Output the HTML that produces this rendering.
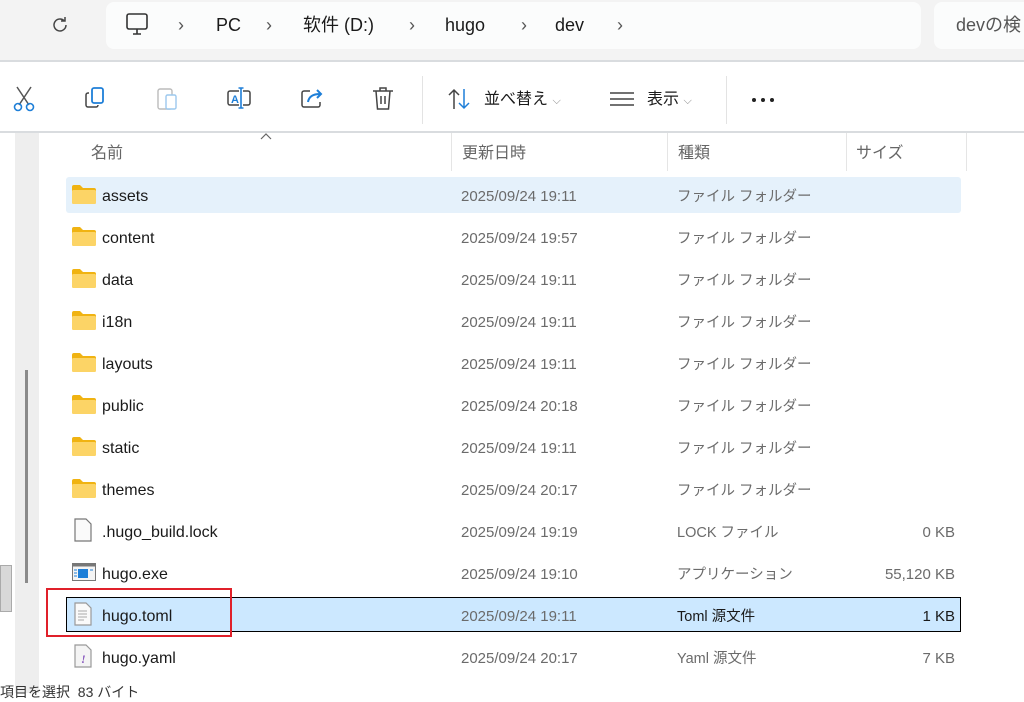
<!DOCTYPE html>
<html><head><meta charset="utf-8">
<style>
*{margin:0;padding:0;box-sizing:border-box}
body{width:1024px;height:698px;overflow:hidden;background:#fff;font-family:"Segoe UI","Liberation Sans","Noto Sans CJK JP",sans-serif;position:relative;color:#1a1a1a}
.abs{position:absolute}
.top{left:0;top:0;width:1024px;height:62px;background:#f3f3f3;border-bottom:2px solid #d9dcdf}
.addr{left:106px;top:2px;width:815px;height:47px;background:#fbfcfc;border-radius:8px}
.search{left:934px;top:2px;width:100px;height:47px;background:#fbfcfc;border-radius:8px}
.t{font-size:18px;line-height:20px;white-space:nowrap}
.g{color:#555}
.row{position:absolute;left:66px;width:895px;height:36px;line-height:36px}
.row div{position:absolute;top:2px;white-space:nowrap;line-height:36px}
.nm{left:36px;font-size:16px;color:#1a1a1a}
.dt{left:395px;font-size:15px;color:#6b6b6b}
.ty{left:611px;font-size:14.5px;color:#6b6b6b}
.sz{right:6px;font-size:15px;color:#6b6b6b}
.fold{position:absolute;left:6px;top:8px;width:24px;height:19px}
.hd{top:144px;font-size:16px;color:#666;line-height:20px}
.sep{width:1px;height:38px;top:133px;background:#e5e5e5}
</style></head><body>
<div class="abs top"></div>
<svg class="abs" style="left:50px;top:15px" width="20" height="20" viewBox="0 0 20 20"><path d="M16 10a6 6 0 1 1-2-4.5M15 2v4h-4" fill="none" stroke="#444" stroke-width="1.5"/></svg>
<div class="abs addr"></div>
<div class="abs search"></div>
<svg class="abs" style="left:125px;top:12px" width="26" height="26" viewBox="0 0 26 26"><rect x="2" y="2" width="20" height="15" rx="2" fill="none" stroke="#333" stroke-width="1.6"/><path d="M8 22h8M12 17v5" stroke="#333" stroke-width="1.6"/></svg>
<div class="abs t g" style="left:178px;top:15px">›</div>
<div class="abs t" style="left:216px;top:15px">PC</div>
<div class="abs t g" style="left:266px;top:15px">›</div>
<div class="abs t" style="left:303px;top:15px">软件 (D:)</div>
<div class="abs t g" style="left:409px;top:15px">›</div>
<div class="abs t" style="left:445px;top:15px">hugo</div>
<div class="abs t g" style="left:521px;top:15px">›</div>
<div class="abs t" style="left:555px;top:15px">dev</div>
<div class="abs t g" style="left:617px;top:15px">›</div>
<div class="abs t" style="left:956px;top:15px;color:#555">devの検</div>

<svg class="abs" style="left:12px;top:85px" width="24" height="28" viewBox="0 0 24 28"><path d="M5 2l12 18M19 2L7 20" stroke="#555" stroke-width="1.5"/><circle cx="6" cy="22" r="3.5" fill="none" stroke="#1e7fd8" stroke-width="1.6"/><circle cx="18" cy="22" r="3.5" fill="none" stroke="#1e7fd8" stroke-width="1.6"/></svg>
<svg class="abs" style="left:84px;top:86px" width="24" height="24" viewBox="0 0 24 24"><path d="M5 7h-1a2 2 0 0 0-2 2v10a2 2 0 0 0 2 2h8a2 2 0 0 0 2-2" fill="none" stroke="#444" stroke-width="1.5"/><rect x="8" y="2" width="11" height="15" rx="2" fill="none" stroke="#1e7fd8" stroke-width="1.8"/></svg>
<svg class="abs" style="left:156px;top:86px" width="24" height="26" viewBox="0 0 24 26"><rect x="2" y="3" width="14" height="20" rx="2" fill="none" stroke="#bbb" stroke-width="1.4"/><rect x="10" y="9" width="10" height="14" rx="1.5" fill="#fff" stroke="#9cc8ee" stroke-width="1.4"/></svg>
<svg class="abs" style="left:226px;top:86px" width="28" height="26" viewBox="0 0 28 26"><rect x="2" y="5" width="22" height="14" rx="2" fill="none" stroke="#444" stroke-width="1.5"/><rect x="13" y="3" width="4" height="20" fill="#fff"/><path d="M15 2v20M12.5 2h5M12.5 22h5" stroke="#1e7fd8" stroke-width="1.6"/><text x="5" y="17" font-size="11" font-family="Liberation Sans" font-weight="bold" fill="#1e7fd8">A</text></svg>
<svg class="abs" style="left:300px;top:86px" width="26" height="24" viewBox="0 0 26 24"><path d="M10 5H4a2 2 0 0 0-2 2v12a2 2 0 0 0 2 2h14a2 2 0 0 0 2-2v-3" fill="none" stroke="#444" stroke-width="1.5"/><path d="M8 16c1-6 6-8 12-8M17 4l4 4-4 4" fill="none" stroke="#1e7fd8" stroke-width="2"/></svg>
<svg class="abs" style="left:371px;top:86px" width="24" height="26" viewBox="0 0 24 26"><path d="M2 5h20M9 5V2h6v3M5 5l1.5 18h11L19 5M10 10v8M14 10v8" fill="none" stroke="#444" stroke-width="1.5"/></svg>
<div class="abs" style="left:422px;top:76px;width:1px;height:48px;background:#e3e3e3"></div>
<svg class="abs" style="left:447px;top:88px" width="26" height="22" viewBox="0 0 26 22"><path d="M7 21V2M2 7l5-5 5 5" fill="none" stroke="#444" stroke-width="1.5"/><path d="M17 1v19M12 15l5 5 5-5" fill="none" stroke="#1e7fd8" stroke-width="1.5"/></svg>
<div class="abs" style="left:484px;top:90px;font-size:16px;line-height:20px">並べ替え <span style="color:#888;font-size:11px">⌵</span></div>
<svg class="abs" style="left:610px;top:92px" width="24" height="14"><path d="M0 1h24M0 7h24M0 13h24" stroke="#444" stroke-width="1.4"/></svg>
<div class="abs" style="left:647px;top:90px;font-size:16px;line-height:20px">表示 <span style="color:#888;font-size:11px">⌵</span></div>
<div class="abs" style="left:726px;top:76px;width:1px;height:48px;background:#e3e3e3"></div>
<svg class="abs" style="left:751px;top:97px" width="26" height="6"><circle cx="3" cy="3" r="2" fill="#222"/><circle cx="12" cy="3" r="2" fill="#222"/><circle cx="21" cy="3" r="2" fill="#222"/></svg>
<div class="abs" style="left:0;top:131px;width:1024px;height:2px;background:#d9dcdf"></div>

<div class="abs" style="left:15px;top:133px;width:24px;height:560px;background:#eeeeee"></div>
<div class="abs" style="left:25px;top:370px;width:3px;height:213px;background:#8a8a8a"></div>
<div class="abs" style="left:0;top:565px;width:12px;height:47px;background:#d8d8d8;border:1px solid #aaa"></div>

<svg class="abs" style="left:260px;top:133px" width="12" height="7"><path d="M1 6l5-5 5 5" fill="none" stroke="#666" stroke-width="1.2"/></svg>
<div class="abs hd" style="left:91px">名前</div>
<div class="abs hd" style="left:462px">更新日時</div>
<div class="abs hd" style="left:678px">種類</div>
<div class="abs hd" style="left:856px">サイズ</div>
<div class="abs sep" style="left:451px"></div>
<div class="abs sep" style="left:667px"></div>
<div class="abs sep" style="left:846px"></div>
<div class="abs sep" style="left:966px"></div>

<div class="row" style="top:177px;background:#e5f1fb;border-radius:3px"><svg class="fold" viewBox="0 0 24 19"><path d="M0 2a2 2 0 0 1 2-2h6l3 3h11a2 2 0 0 1 2 2v12a2 2 0 0 1-2 2H2a2 2 0 0 1-2-2z" fill="#f0b312"/><rect x="0" y="5" width="24" height="14" rx="1.5" fill="#fcd466"/></svg><div class="nm">assets</div><div class="dt">2025/09/24 19:11</div><div class="ty">ファイル フォルダー</div></div>
<div class="row" style="top:219px"><svg class="fold" viewBox="0 0 24 19"><path d="M0 2a2 2 0 0 1 2-2h6l3 3h11a2 2 0 0 1 2 2v12a2 2 0 0 1-2 2H2a2 2 0 0 1-2-2z" fill="#f0b312"/><rect x="0" y="5" width="24" height="14" rx="1.5" fill="#fcd466"/></svg><div class="nm">content</div><div class="dt">2025/09/24 19:57</div><div class="ty">ファイル フォルダー</div></div>
<div class="row" style="top:261px"><svg class="fold" viewBox="0 0 24 19"><path d="M0 2a2 2 0 0 1 2-2h6l3 3h11a2 2 0 0 1 2 2v12a2 2 0 0 1-2 2H2a2 2 0 0 1-2-2z" fill="#f0b312"/><rect x="0" y="5" width="24" height="14" rx="1.5" fill="#fcd466"/></svg><div class="nm">data</div><div class="dt">2025/09/24 19:11</div><div class="ty">ファイル フォルダー</div></div>
<div class="row" style="top:303px"><svg class="fold" viewBox="0 0 24 19"><path d="M0 2a2 2 0 0 1 2-2h6l3 3h11a2 2 0 0 1 2 2v12a2 2 0 0 1-2 2H2a2 2 0 0 1-2-2z" fill="#f0b312"/><rect x="0" y="5" width="24" height="14" rx="1.5" fill="#fcd466"/></svg><div class="nm">i18n</div><div class="dt">2025/09/24 19:11</div><div class="ty">ファイル フォルダー</div></div>
<div class="row" style="top:345px"><svg class="fold" viewBox="0 0 24 19"><path d="M0 2a2 2 0 0 1 2-2h6l3 3h11a2 2 0 0 1 2 2v12a2 2 0 0 1-2 2H2a2 2 0 0 1-2-2z" fill="#f0b312"/><rect x="0" y="5" width="24" height="14" rx="1.5" fill="#fcd466"/></svg><div class="nm">layouts</div><div class="dt">2025/09/24 19:11</div><div class="ty">ファイル フォルダー</div></div>
<div class="row" style="top:387px"><svg class="fold" viewBox="0 0 24 19"><path d="M0 2a2 2 0 0 1 2-2h6l3 3h11a2 2 0 0 1 2 2v12a2 2 0 0 1-2 2H2a2 2 0 0 1-2-2z" fill="#f0b312"/><rect x="0" y="5" width="24" height="14" rx="1.5" fill="#fcd466"/></svg><div class="nm">public</div><div class="dt">2025/09/24 20:18</div><div class="ty">ファイル フォルダー</div></div>
<div class="row" style="top:429px"><svg class="fold" viewBox="0 0 24 19"><path d="M0 2a2 2 0 0 1 2-2h6l3 3h11a2 2 0 0 1 2 2v12a2 2 0 0 1-2 2H2a2 2 0 0 1-2-2z" fill="#f0b312"/><rect x="0" y="5" width="24" height="14" rx="1.5" fill="#fcd466"/></svg><div class="nm">static</div><div class="dt">2025/09/24 19:11</div><div class="ty">ファイル フォルダー</div></div>
<div class="row" style="top:471px"><svg class="fold" viewBox="0 0 24 19"><path d="M0 2a2 2 0 0 1 2-2h6l3 3h11a2 2 0 0 1 2 2v12a2 2 0 0 1-2 2H2a2 2 0 0 1-2-2z" fill="#f0b312"/><rect x="0" y="5" width="24" height="14" rx="1.5" fill="#fcd466"/></svg><div class="nm">themes</div><div class="dt">2025/09/24 20:17</div><div class="ty">ファイル フォルダー</div></div>
<div class="row" style="top:513px"><svg style="position:absolute;left:8px;top:5px" width="18" height="24" viewBox="0 0 18 24"><path d="M1 1h11l5 5v17H1z" fill="#fafafa" stroke="#777" stroke-width="1.2"/></svg><div class="nm">.hugo_build.lock</div><div class="dt">2025/09/24 19:19</div><div class="ty">LOCK ファイル</div><div class="sz">0 KB</div></div>
<div class="row" style="top:555px"><svg style="position:absolute;left:6px;top:8px" width="24" height="18" viewBox="0 0 24 18"><rect x="0.5" y="0.5" width="23" height="17" fill="#f4f4f4" stroke="#777"/><rect x="0.5" y="0.5" width="23" height="3" fill="#777"/><rect x="6" y="6" width="10" height="9" fill="#1e7fd8"/><path d="M2 7h3M2 10h3M2 13h3M18 7h3" stroke="#1e7fd8"/></svg><div class="nm">hugo.exe</div><div class="dt">2025/09/24 19:10</div><div class="ty">アプリケーション</div><div class="sz">55,120 KB</div></div>
<div class="row" style="top:597px;background:#cce8ff;border:1px solid #000;height:35px;line-height:33px"><svg style="position:absolute;left:7px;top:4px" width="18" height="24" viewBox="0 0 18 24"><path d="M1 1h11l5 5v17H1z" fill="#fafafa" stroke="#999" stroke-width="1.2"/><path d="M4 9h9M4 12h9M4 15h9M4 18h6" stroke="#aaa"/></svg><div class="nm" style="left:35px;line-height:34px">hugo.toml</div><div class="dt" style="left:394px;line-height:34px">2025/09/24 19:11</div><div class="ty" style="color:#1a1a1a;left:610px;line-height:34px">Toml 源文件</div><div class="sz" style="color:#1a1a1a;right:5px;line-height:34px">1 KB</div></div>
<div class="row" style="top:639px"><svg style="position:absolute;left:8px;top:5px" width="18" height="24" viewBox="0 0 18 24"><path d="M1 1h11l5 5v17H1z" fill="#f4f4f4" stroke="#999" stroke-width="1.2"/><text x="7" y="19" font-size="12" font-family="Liberation Serif" font-style="italic" font-weight="bold" fill="#8a5bbf">!</text></svg><div class="nm">hugo.yaml</div><div class="dt">2025/09/24 20:17</div><div class="ty">Yaml 源文件</div><div class="sz">7 KB</div></div>

<div class="abs" style="left:46px;top:588px;width:186px;height:49px;border:2px solid #e0202a"></div>
<div class="abs" style="left:0;top:682px;font-size:14px;color:#333;white-space:nowrap">項目を選択&nbsp;&nbsp;83 バイト</div>
</body></html>
